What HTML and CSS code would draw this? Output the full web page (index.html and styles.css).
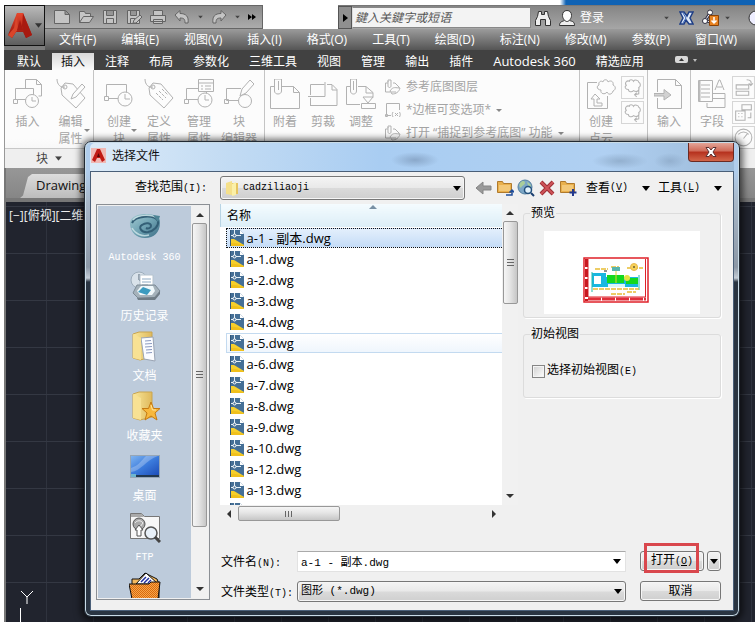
FILE: index.html
```html
<!DOCTYPE html>
<html lang="zh-CN">
<head>
<meta charset="utf-8">
<title>选择文件</title>
<link rel="stylesheet" href="styles.css">
</head>
<body>
<svg class="sprite" aria-hidden="true">
  <defs>
    <linearGradient id="gFolder" x1="0" x2="1"><stop offset="0" stop-color="#f9e79a"/><stop offset="1" stop-color="#dfb95c"/></linearGradient>
    <linearGradient id="gScreen" x1="0" y1="0" x2="1" y2="1"><stop offset="0" stop-color="#7fb4f0"/><stop offset=".5" stop-color="#3b7bdc"/><stop offset="1" stop-color="#1d4db8"/></linearGradient>
    <linearGradient id="gSwirl" x1="0" y1="0" x2="1" y2="1"><stop offset="0" stop-color="#a5cbd2"/><stop offset=".5" stop-color="#6fa3b3"/><stop offset="1" stop-color="#3c6c84"/></linearGradient>
    <linearGradient id="gRed" x1="0" y1="0" x2="0" y2="1"><stop offset="0" stop-color="#e8482e"/><stop offset="1" stop-color="#8e120c"/></linearGradient>
    <pattern id="pDots" width="2" height="2" patternUnits="userSpaceOnUse"><rect width="2" height="2" fill="#f7a64a"/><rect width="1" height="1" fill="#d8690e"/><rect x="1" y="1" width="1" height="1" fill="#d8690e"/></pattern>
  </defs>
  <symbol id="dwg" viewBox="0 0 14 16">
    <path d="M0 0h10l4 4v12H0z" fill="#456f96"/><path d="M0 9h4l10 6v1H0z" fill="#f6cf2c"/><path d="M0 13c5-1 8 1 14 2v1H0z" fill="#f0c01c"/>
    <path d="M4.500 0v7M0 5.500h11" stroke="#e6f0f6" fill="none"/><circle cx="4.500" cy="5.500" r="1.500" fill="#456f96" stroke="#fff"/>
    <path d="M10 0v4h4z" fill="#fff"/><path d="M.5 0v16" stroke="#31567a"/>
  </symbol>
  <symbol id="down" viewBox="0 0 8 5"><path d="M0 0h8L4 5z" fill="currentColor"/></symbol>
  <symbol id="block" viewBox="0 0 30 30"><path d="M2.500 5.500h20v14h-20z" class="ln"/><circle cx="21" cy="20" r="7" class="ln disc"/><path d="M21 20v-5M21 20h5" class="ln"/><path d="M.5 17.500h4v4h-4z" class="ln disc"/></symbol>
  <symbol id="insert" viewBox="0 0 30 30"><path d="M12.500 9V.5h11l5 5V17h-3M23.500.5v5h5" class="ln"/><path d="M2.500 9.500h18v11h-18z" class="ln"/><circle cx="19" cy="22" r="6.500" class="ln disc"/><path d="M19 22v-4M19 22h4" class="ln"/><path d="M.5 20.500h4v4h-4z" class="ln disc"/></symbol>
  <symbol id="tag" viewBox="0 0 30 30"><path d="M5 9 9 4l8 1 12 14-9 10L6 16zM1 0c0 6 4 9 8 8" class="ln"/><circle cx="9" cy="8" r="2" class="ln"/><path d="m12 14 7 7M15 12l7 7M18 10l6 6" class="ln" stroke-dasharray="3 1"/></symbol>
  <symbol id="tagpen" viewBox="0 0 30 30"><path d="M5 9 9 4l8 1 12 14-9 10L6 16zM1 0c0 6 4 9 8 8" class="ln"/><circle cx="9" cy="8" r="2" class="ln"/><path d="m15 20 2-5L26 5l3 3-9 10z" class="ln disc"/></symbol>
  <symbol id="manage" viewBox="0 0 30 30"><path d="M14.500.5h15v12h-15zM14 4h15M17 7h2M21 7h6M17 10h2M21 10h6" class="ln"/><path d="M14 9.500H2.500v11h12M22.500 13v2" class="ln"/><circle cx="21" cy="21" r="7" class="ln disc"/><path d="M21 21v-5M21 21h4M.5 20.500h4v4h-4z" class="ln"/></symbol>
  <symbol id="blockedit" viewBox="0 0 30 30"><path d="M17 9.500H2.500v12h12" class="ln"/><circle cx="21" cy="22" r="6.500" class="ln"/><path d="m16 17 2-7 8-9 4 4-8 9z" class="ln disc"/><path d="M.5 20.500h4v4h-4z" class="ln"/></symbol>
  <symbol id="attach" viewBox="0 0 30 30"><path d="M4 7.500H.5v22h29v-16l-6-6H12M23.500 7.500v6h6" class="ln"/><path d="M4.500 3v9c0 4 7 4 7 0V0h-7v3M8.500 2v9" class="ln"/></symbol>
  <symbol id="clip" viewBox="0 0 30 30"><path d="M2.500 16V5.500h14M3 26.500h26v-16l-5-5h-5M24 6v5h5M0 17.500h17V3M2.500 19v8" class="ln"/></symbol>
  <symbol id="adjust" viewBox="0 0 30 30"><path d="M4 7.500H.5v18H14M12 7.500h8l7 6v5M20 8v6h7" class="ln"/><path d="M4.500 3v9c0 4 6 4 6 0V0h-6v3M7.500 2v9M17 18h10l-5 6zM15.500 24.500h14v5h-14z" class="ln"/></symbol>
  <symbol id="cloud" viewBox="0 0 30 30"><path d="M11 3.500H1.500v26h20V17" class="ln"/><path d="M17 3c0-3 5-3 5 0 2-2 6-1 5 3 3 1 3 5 0 6-1 4-5 4-6 1-2 3-7 2-6-2-4 0-5-4-2-5-1-3 2-5 4-3zM5 20l4-5 5 5h-3v4h5v3H8v-7z" class="ln"/></symbol>
  <symbol id="cloudsm" viewBox="0 0 22 22"><path d="M.5.5h21v21H.5z" class="box"/><path d="M8 5c0-2 3-2 4 0 1-2 5-1 5 1 2 1 2 4 0 5 1 3-2 5-5 3-2 2-5 1-5-1-3 0-4-3-2-4-2-3 1-5 3-4zM17 13v4l-4 1M15 16l-2 2 2 2" class="ln"/></symbol>
  <symbol id="import" viewBox="0 0 30 30"><path d="M3.500 13V.5h18l6 6v23h-24V19M21.500.5v6h6" class="ln"/><path d="M0 14.500h10v-4l7 5.500-7 5v-4H0z" fill="#d2d2d2" stroke="#b2b2b2"/></symbol>
  <symbol id="field" viewBox="0 0 30 30"><path d="M1.500 1.500h14v21h-14zM4 6h9M4 10h9M4 14h9M4 18h9M18 11l4-10h1l4 10M20 8h5M16 14.500h12v5H16M10 24v4.500h18v-9" class="ln"/><path d="M2.500 2v20" stroke="#bbb" stroke-width="2"/></symbol>
  <symbol id="row" viewBox="0 0 22 22"><path d="M.5.5h21v21H.5z" class="box"/><path d="M4 8.500h12v4H4zM4 14.500h12v4H4zM14 3.500c4 0 5 2 4 5M16 7l2 2 2-2" class="ln"/></symbol>
  <symbol id="rowgrid" viewBox="0 0 22 22"><path d="M.5.5h21v21H.5z" class="box"/><path d="M9.500 3.500h9v5h-9zM3.500 9.500h9v9h-9zM6 12h1M9 12h1M6 15h1M9 15h1M18 11v5h-3" class="ln"/></symbol>
  <symbol id="dial" viewBox="0 0 22 22"><path d="M.5.5h21v21H.5z" class="box"/><circle cx="11" cy="11" r="8" class="ln"/><path d="M6 8c3-3 7-3 10 0M11 12l4-5" class="ln"/></symbol>
  <symbol id="leaf" viewBox="0 0 16 16"><path d="M3 4H.5v9H5M3 2v5c0 2 3 2 3 0V1H3v2M8 4h2l4 4v1M5 12c3-5 6-3 10-3-1 4-4 6-8 6zM6 13h5" class="ln"/></symbol>
  <symbol id="frame" viewBox="0 0 16 16"><path d="M14.500 8V1.500H1.500v12H6M.5 12.500h2v2h-2zM8 10c-1 2-1 3 0 5M10 11l3 3M13 11l-3 3M14.500 10c1 2 1 3 0 5" class="ln"/></symbol>
  <symbol id="folder" viewBox="0 0 18 18"><path d="M1.500 2.500h5l1 2h8v9h-14z" fill="#e9b04c" stroke="#b07a2c"/><path d="M3 6h11v6H3z" fill="#f3c878"/></symbol>
</svg>

<div class="app">
  <header class="top">
    <button class="logo" aria-label="应用程序菜单">
      <svg width="24" height="28" viewBox="0 0 24 28"><path d="M9 1h6l9 22-6 3-3-6H8l-4 6-4-3z" fill="url(#gRed)"/><path d="M9 1 6 16l-6 7 4 3 6-9z" fill="#d9452a"/><path d="m12 8 3 10H9z" fill="#a81a10"/><path d="m15 1 9 22-6 3-4-12z" fill="#a81a10"/></svg>
      <svg class="tri" width="8" height="5"><use href="#down"/></svg>
    </button>
    <div class="bars">
      <div class="titlebar">
        <div class="quick">
          <svg width="16" height="14" viewBox="0 0 16 14"><path d="M.5.5h11l4 4v9H.5zM11 .5v4h4.500" class="q"/></svg>
          <svg width="16" height="14" viewBox="0 0 16 14"><path d="M1.500 12.500v-11h5l1 2h5v3M1.500 12.500l4-6h10l-4 6z" class="q"/></svg>
          <svg width="16" height="14" viewBox="0 0 16 14"><path d="M1.500.5h13v13h-13zM4.500.5v5h7v-5M4.500 13.500v-5h7v5" class="q"/></svg>
          <svg width="16" height="14" viewBox="0 0 16 14"><path d="M1.500.5h12v13h-12zM4.500.5v5h6v-5M4.500 13.500v-5h5" class="q"/><path d="m7 13 1-3 6-5 2 2-6 6z" class="q"/></svg>
          <svg width="16" height="14" viewBox="0 0 16 14"><path d="M3.500 5.500v-5h9v5M.5 5.500h15v6H.5zM3.500 9.500h9v4h-9z" class="q"/></svg>
          <svg width="16" height="14" viewBox="0 0 16 14"><path d="m1 5 5-4.500v3c6 0 9 3 8 9.500h-3c0-4-1-5-5-5v3z" class="q"/></svg>
          <svg class="dim" width="5" height="4" viewBox="0 0 8 5"><use href="#down"/></svg>
          <svg width="16" height="14" viewBox="0 0 16 14"><path d="m15 5-5-4.500v3c-6 0-9 3-8 9.500h3c0-4 1-5 5-5v3z" class="q"/></svg>
          <svg class="dim" width="5" height="4" viewBox="0 0 8 5"><use href="#down"/></svg>
          <svg width="8" height="6" viewBox="0 0 8 6"><path d="m0 0 4 3-4 3zM4 0l4 3-4 3z"/></svg>
        </div>
        <div class="info">
          <button class="expand" aria-label="展开"><svg width="5" height="8" viewBox="0 0 5 8"><path d="m0 0 5 4-5 4z"/></svg></button>
          <input class="search" type="text" aria-label="搜索" placeholder="鍵入关鍵字或短语">
          <svg class="bino" width="16" height="16" viewBox="0 0 16 16"><path d="M3.500 1.500h3v3h3v-3h3l1 5 2 4v5h-5v-6h-5v6h-5v-5l2-4z" fill="#eee" stroke="#333"/></svg>
          <svg class="person" width="16" height="16" viewBox="0 0 16 16"><path d="M.5 15.500c0-4 3-4 5-5h5c3 1 5 1 5 5z" fill="#eee" stroke="#333"/><path d="M8 .5c3 0 4.500 2 4.500 5S10 11.500 8 11.500 3.500 8.500 3.500 5.500 5 .5 8 .5z" fill="#fff" stroke="#333"/></svg>
          <a class="login" href="#">登录</a>
          <svg class="dim" width="5" height="4" viewBox="0 0 8 5"><use href="#down"/></svg>
          <svg width="15" height="14" viewBox="0 0 15 14"><path d="M1 1h4l3 4 2-4h4l-3 6 3 6h-4L7 9l-2 4H1l3-6z" fill="#dfe9f8" stroke="#1e3e86" stroke-width="1.500"/><path d="m4 2 3 5-3 5" fill="none" stroke="#3a66b8"/></svg>
          <svg class="share" width="17" height="17" viewBox="0 0 17 17"><path d="m8 4-5 8 8 1z" fill="none" stroke="#334" stroke-width="3"/><path d="m8 4-5 8 8 1" fill="none" stroke="#eef"/><circle cx="8" cy="3.500" r="2.500" fill="#fff" stroke="#334"/><circle cx="3" cy="12" r="2.500" fill="#fff" stroke="#334"/><path d="M7.500 6.500h9v10h-9z" fill="#e88220" stroke="#8a4206"/><path d="M12 8v6M9.500 11.500 12 14l2.500-2.500" fill="none" stroke="#fff" stroke-width="1.500"/></svg>
          <svg class="dim" width="5" height="4" viewBox="0 0 8 5"><use href="#down"/></svg>
          <svg class="help" width="16" height="16" viewBox="0 0 16 16"><circle cx="8" cy="8" r="7" fill="#eef" stroke="#333"/></svg>
        </div>
      </div>
      <nav class="menubar">
        <a href="#">文件(F)</a><a href="#">编辑(E)</a><a href="#">视图(V)</a><a href="#">插入(I)</a><a href="#">格式(O)</a><a href="#">工具(T)</a><a href="#">绘图(D)</a><a href="#">标注(N)</a><a href="#">修改(M)</a><a href="#">参数(P)</a><a href="#">窗口(W)</a>
      </nav>
    </div>
  </header>
  <nav class="tabs">
    <a href="#">默认</a><a href="#" class="active">插入</a><a href="#">注释</a><a href="#">布局</a><a href="#">参数化</a><a href="#">三维工具</a><a href="#">视图</a><a href="#">管理</a><a href="#">输出</a><a href="#">插件</a><a href="#" class="latin">Autodesk 360</a><a href="#">精选应用</a>
    <svg class="minimize" width="22" height="8" viewBox="0 0 22 8"><rect width="13" height="7" rx="2" fill="#d8d8d8"/><path d="m4 5 2.500-3L9 5z" fill="#333"/><path d="M18 3h4l-2 3z" fill="#bbb"/></svg>
  </nav>
  <section class="ribbon">
    <div class="panel">
      <div class="tools wide">
        <button><svg><use href="#insert"/></svg>插入</button>
        <button><svg><use href="#tagpen"/></svg>编辑<br>属性<i class="drop"></i></button>
      </div>
      <div class="caption">块<svg width="7" height="5" viewBox="0 0 8 5"><use href="#down"/></svg></div>
    </div>
    <div class="panel pad">
      <div class="tools">
        <button><svg><use href="#block"/></svg>创建<br>块<i class="drop"></i></button>
        <button><svg><use href="#tag"/></svg>定义<br>属性</button>
        <button><svg><use href="#manage"/></svg>管理<br>属性</button>
        <button><svg><use href="#blockedit"/></svg>块<br>编辑器</button>
      </div>
      <div class="caption"></div>
    </div>
    <div class="panel grow">
      <div class="tools narrow">
        <button><svg><use href="#attach"/></svg>附着</button>
        <button><svg><use href="#clip"/></svg>剪裁</button>
        <button><svg><use href="#adjust"/></svg>调整</button>
        <div class="small">
          <button><svg><use href="#leaf"/></svg>参考底图图层</button>
          <button><svg><use href="#frame"/></svg>*边框可变选项*<i class="drop"></i></button>
          <button><svg><use href="#leaf"/></svg><span>打开 “捕捉到参考底图” 功能</span><i class="drop"></i></button>
        </div>
      </div>
      <div class="caption"></div>
    </div>
    <div class="panel">
      <div class="tools">
        <button><svg><use href="#cloud"/></svg>创建<br>点云</button>
        <div class="mini"><svg><use href="#cloudsm"/></svg><svg><use href="#cloudsm"/></svg></div>
      </div>
      <div class="caption"></div>
    </div>
    <div class="panel">
      <div class="tools"><button><svg><use href="#import"/></svg>输入</button></div>
      <div class="caption"></div>
    </div>
    <div class="panel last">
      <div class="tools">
        <button><svg><use href="#field"/></svg>字段</button>
        <div class="mini"><svg><use href="#row"/></svg><svg><use href="#rowgrid"/></svg><svg><use href="#dial"/></svg></div>
      </div>
      <div class="caption"></div>
    </div>
  </section>
  <div class="doctabs"><a href="#" class="doc">Drawing</a></div>
  <main class="canvas">
    <span class="viewlabel">[−][俯视][二维</span>
    <svg class="ucs" width="14" height="32" viewBox="0 0 14 32"><path d="m1 1 6 6 6-6M7 7v7M.5 18v14" stroke="#fff" fill="none"/></svg>
  </main>
</div>

<div class="dialog" role="dialog" aria-labelledby="dialog-title">
  <div class="caption-bar">
    <svg width="15" height="15" viewBox="0 0 15 15"><rect width="15" height="15" fill="#f0b9b4"/><path d="M6 1h3l5 11-3 2-2-4H6l-2 4-3-2z" fill="#c01a14"/><path d="m7.500 5 1.500 4H6z" fill="#5a0806"/></svg>
    <h1 id="dialog-title">选择文件</h1>
    <button class="close" aria-label="关闭"><svg width="12" height="10" viewBox="0 0 12 10"><path d="M1 .5h3l2 2.500 2-2.500h3L8 5l3 4.500H8L6 7 4 9.500H1L4 5z" fill="#fff" stroke="#5d3030"/></svg></button>
  </div>
  <div class="sheet">
    <div class="lookin">
      <label for="look">查找范围<span class="m">(I):</span></label>
      <div class="combo">
        <svg class="cfolder" width="15" height="15" viewBox="0 0 15 15"><path d="M1 2 7 0v14l-6-1z" fill="#f5e08a"/><path d="M7 2h6v11H7z" fill="#e6c460"/><path d="M7 3 11 1v13l-4 1z" fill="#fbf0a8"/></svg>
        <select id="look" class="face m"><option>cadziliaoji</option></select>
        <svg class="arrow" width="8" height="5"><use href="#down"/></svg>
      </div>
      <div class="toolbar">
        <button aria-label="返回"><svg width="17" height="14" viewBox="0 0 17 14"><path d="m1 7 7-6v4h8v4H8v4z" fill="#9a9a9a" stroke="#858585"/></svg></button>
        <button aria-label="上一级"><svg width="18" height="18" viewBox="0 0 18 18"><use href="#folder"/><path d="M10 16h6v-5M13.500 13.500 16 11l2.500 2.500" fill="none" stroke="#1f4d9a" stroke-width="1.500"/></svg></button>
        <button aria-label="搜索 Web"><svg width="18" height="18" viewBox="0 0 18 18"><circle cx="8" cy="8" r="7" fill="#7ba6c6" stroke="#54809f"/><path d="M3 4c3-3 5-2 5 0s-3 2-4 5c-2-1-2-3-1-5zM10 3c3 1 4 3 4 5l-3-2z" fill="#a9cd9a"/><circle cx="11" cy="11" r="3.500" fill="#e2f2fb" stroke="#22507c" stroke-width="1.500"/><path d="m14 14 3 3" stroke="#1b3f70" stroke-width="2"/></svg></button>
        <button aria-label="删除"><svg width="16" height="16" viewBox="0 0 16 16"><path d="m2 2 12 12M14 2 2 14" stroke="#9e2f34" stroke-width="4"/><path d="m2 2 12 12M14 2 2 14" stroke="#cf5459" stroke-width="2"/></svg></button>
        <button aria-label="新建文件夹"><svg width="18" height="18" viewBox="0 0 18 18"><use href="#folder"/><path d="M14 10v7M10.500 13.500h7" stroke="#23388c" stroke-width="2"/></svg></button>
        <button class="menu">查看<span class="m">(<u>V</u>)</span><svg width="8" height="5"><use href="#down"/></svg></button>
        <button class="menu">工具<span class="m">(<u>L</u>)</span><svg width="8" height="5"><use href="#down"/></svg></button>
      </div>
    </div>

    <div class="places">
      <ul>
        <li><svg viewBox="0 0 32 32"><path d="M1 14C0 7 7 3 16 3s16 2 15 9c0 9-6 15-15 15S2 21 1 14z" fill="url(#gSwirl)"/><path d="M3 12C6 5 25 3 29 10c1 5-4 10-10 11-7 1-10-5-6-7 4-3 9-2 9 1 0 2-3 3-5 2" stroke="#335f76" stroke-width="2" fill="none"/><path d="M4 9C9 3 24 3 29 8M3 17c3 6 10 9 17 7" stroke="#cfe6ea" stroke-width="1.500" fill="none" opacity=".8"/><path d="M24 4l7 1-2 6z" fill="#4f8596"/></svg><span class="m">Autodesk 360</span></li>
        <li><svg viewBox="0 0 32 32"><circle cx="10" cy="9" r="8" fill="#d9e2ea" stroke="#9dadbb"/><path d="M10 9V3M10 9l5 2" stroke="#567"/><path d="M11 4h13v15H11z" fill="#fff" stroke="#b5c3ce"/><path d="M13 8h9M13 11h9M13 14h6" stroke="#8fabc4"/><path d="m4 22 4-8h18l5 6-6 7H9z" fill="#a5b2bb" stroke="#7c8a95"/><path d="m8 20 4-5h12l2 5-3 4H11z" fill="#f0f8fb"/><path d="m9 21 5-5 8 3-4 5z" fill="#3b9bc0"/><path d="m8 27 18-1 5-6v3l-5 6H9z" fill="#6f7c86"/></svg>历史记录</li>
        <li><svg viewBox="0 0 32 32"><path d="M4 3 10 1h13v25l-12 3-7-2z" fill="url(#gFolder)" stroke="#c9a550"/><path d="m12 7 12-1 2 24-11-2z" fill="#fbfcff" stroke="#9aa4b4"/><path d="m16 10 6-.5M16 13l7-.5M16 16l7-.5M17 19l6-.5M17 22l6-.5" stroke="#8b9ac0"/><path d="m4 3 8 4v22l-8-2z" fill="#f8e193"/></svg>文档</li>
        <li><svg viewBox="0 0 32 32"><path d="M4 3 10 1h13v25l-12 3-7-2z" fill="url(#gFolder)" stroke="#c9a550"/><path d="m4 3 8 4v22l-8-2z" fill="#f8e193"/><path d="m22 11 2.500 6.500H31l-5 4.500 2 7-6-4-6 4 2-7-5-4.500h6.500z" fill="#f8b83c" stroke="#c57a12"/><path d="m22 14 1.500 5H27" fill="none" stroke="#ffe6a0"/></svg>收藏夹</li>
        <li><svg viewBox="0 0 32 32"><path d="M1 4h30v23H1z" fill="#96a6b6"/><path d="M2 5h28v19H2z" fill="url(#gScreen)"/><path d="M2 21C12 20 17 9 29 5H17C12 10 9 15 2 17z" fill="#fff" opacity=".25"/><path d="M2 24h28v2H2z" fill="#22384f"/><path d="M2 23h5v3H2z" fill="#6db6cf"/></svg>桌面</li>
        <li><svg viewBox="0 0 32 32"><path d="M1.500 27.500V2.500h11l3 3h15v22z" fill="#f7f7f7" stroke="#777"/><path d="M2 3h11l2 3H2z" fill="#aaa"/><circle cx="10" cy="13" r="6" fill="#aaa" stroke="#555"/><path d="M6 12c2-3 6-3 8 0l-3 4" stroke="#eee" fill="none"/><path d="m10 14 4 5h-2v6H8v-6H6z" fill="#fff" stroke="#555"/><circle cx="22" cy="22" r="6" fill="#e8f0f8" stroke="#555" stroke-width="1.500"/><path d="m26 26 5 5" stroke="#444" stroke-width="3"/></svg><span class="m">FTP</span></li>
        <li><svg viewBox="0 0 32 32"><path d="M3 8h7l6-6 12 6 2 5v14H3z" fill="#f5b95e" stroke="#111"/><path d="M7 13 17 2l12 11z" fill="#fff" stroke="#111"/><path d="m12 11 5-5M15 12l5-5M19 12l3-3" stroke="#2030a0" stroke-width="1.500"/><path d="M0 13h20l2-2h9l-2 17H3z" fill="url(#pDots)" stroke="#111"/></svg></li>
      </ul>
      <div class="vscroll"><i class="up"></i><i class="thumb"></i><i class="dn"></i></div>
    </div>

    <div class="filepane">
      <div class="viewport">
        <table class="files">
          <thead><tr><th>名称<svg class="sort" width="8" height="4" viewBox="0 0 8 4"><path d="m0 4 4-4 4 4z" fill="#7890a4"/></svg></th></tr></thead>
          <tbody>
            <tr class="selected"><td><svg><use href="#dwg"/></svg>a-1 - 副本.dwg</td></tr>
            <tr><td><svg><use href="#dwg"/></svg>a-1.dwg</td></tr>
            <tr><td><svg><use href="#dwg"/></svg>a-2.dwg</td></tr>
            <tr><td><svg><use href="#dwg"/></svg>a-3.dwg</td></tr>
            <tr><td><svg><use href="#dwg"/></svg>a-4.dwg</td></tr>
            <tr class="hover"><td><svg><use href="#dwg"/></svg>a-5.dwg</td></tr>
            <tr><td><svg><use href="#dwg"/></svg>a-6.dwg</td></tr>
            <tr><td><svg><use href="#dwg"/></svg>a-7.dwg</td></tr>
            <tr><td><svg><use href="#dwg"/></svg>a-8.dwg</td></tr>
            <tr><td><svg><use href="#dwg"/></svg>a-9.dwg</td></tr>
            <tr><td><svg><use href="#dwg"/></svg>a-10.dwg</td></tr>
            <tr><td><svg><use href="#dwg"/></svg>a-12.dwg</td></tr>
            <tr><td><svg><use href="#dwg"/></svg>a-13.dwg</td></tr>
            <tr><td><svg><use href="#dwg"/></svg></td></tr>
          </tbody>
        </table>
      </div>
      <div class="vscroll"><i class="up"></i><i class="thumb"></i><i class="dn"></i></div>
      <div class="hscroll"><i class="lt"></i><i class="thumb"></i><i class="rt"></i></div>
    </div>

    <div class="side">
      <fieldset>
        <legend>预览</legend>
        <div class="preview">
          <svg width="66" height="46" viewBox="0 0 66 46">
            <path d="M1 1h64v44H1z" fill="#fff" stroke="#e02028" stroke-width="1.500"/><path d="M5 2v38h57.500V2" fill="none" stroke="#e02028"/><path d="M3.500 2v42" stroke="#c81820" stroke-width="3" stroke-dasharray="8 2"/><path d="M5 42h58" stroke="#e0303a" stroke-width="3" stroke-dasharray="13 1"/>
            <path d="M9 16h14v4h32v10H9z" fill="#19b7e0"/><path d="M24 18h17v8H24zM43 21h12v6H43z" fill="#13d81e"/><path d="M11 19h7v8h-7z" fill="#fff"/><path d="M25 27h17v3H25z" fill="#dcf7f9"/><path d="M9 15v20M56 18v15" stroke="#20bbaa"/>
            <path d="M10 32h46M12 12h13M28 10h8M44 11h16M28 37h14M44 35h9" stroke="#e7bd35" stroke-width="1.500" stroke-dasharray="5 1"/><path d="M33 12v14" stroke="#e0d430"/><circle cx="51" cy="10" r="3.500" fill="#f7d258" stroke="#e8b84c"/><circle cx="44" cy="21" r="3" fill="#e5e340"/><path d="M29 10h8v4h-8z" fill="#58b5ae"/><path d="M21 14h3M50 10h2" stroke="#222"/>
          </svg>
        </div>
      </fieldset>
      <fieldset class="initial">
        <legend>初始视图</legend>
        <label><input type="checkbox"><span>选择初始视图<span class="m">(E)</span></span></label>
      </fieldset>
    </div>

    <form class="bottom">
      <label for="fname">文件名<span class="m">(N):</span></label>
      <div class="combo edit"><input id="fname" type="text" value="a-1 - 副本.dwg"><svg class="arrow" width="8" height="5"><use href="#down"/></svg></div>
      <div class="actions">
        <button type="button" class="face open">打开<span class="m">(<u>O</u>)</span><i class="marker"></i></button>
        <button type="button" class="face split" aria-label="打开选项"><svg width="8" height="5"><use href="#down"/></svg></button>
      </div>
      <label for="ftype">文件类型<span class="m">(T):</span></label>
      <div class="combo"><select id="ftype" class="face"><option>图形 (*.dwg)</option></select><svg class="arrow" width="8" height="5"><use href="#down"/></svg></div>
      <div class="actions"><button type="button" class="face cancel">取消</button></div>
    </form>
  </div>
</div>
</body>
</html>
```
FILE: styles.css
```css
* { box-sizing: border-box; }
body {
  margin: 0;
  height: 100vh;
  overflow: hidden;
  position: relative;
  background: #fff;
  font: 12px/16px "Open Sans", "Noto Sans CJK SC", sans-serif;
  color: #111;
}
button, input, select { font: inherit; color: inherit; margin: 0; padding: 0; border: 0; background: none; border-radius: 0; }
a { color: inherit; text-decoration: none; }
svg { flex: none; display: block; }
.sprite { position: absolute; width: 0; height: 0; }
.ln { fill: none; stroke: #b2b2b2; }
.ln.disc { fill: #fcfcfc; }
.box { fill: none; stroke: #d6d6d6; }
.m { font-family: "Liberation Mono", "Noto Sans CJK SC", monospace; font-size: 10px; }

/* application frame */
.app { height: 100%; padding: 5px 0 0 4px; display: flex; flex-direction: column; background: linear-gradient(90deg, #fff 560px, #0f62b4 566px) top / 100% 5px no-repeat; }
.top { display: flex; height: 45px; background: #7b7b7b; flex: none; }
.logo { width: 41px; height: 41px; border: 1px solid #111; background: linear-gradient(#b9b9b9, #5d5d5d); display: flex; align-items: center; justify-content: center; gap: 3px; flex: none; color: #333; }
.logo .tri { width: 7px; }
.bars { flex: 1; min-width: 0; }
.titlebar { display: flex; height: 24px; background: #fff; }
.quick { flex: none; width: 218px; display: flex; align-items: center; gap: 8px; padding-left: 9px; border: 1px solid #666; border-left: 0; background: linear-gradient(#8b8b8b, #acacac); }
.q { fill: #c4c4c4; stroke: #646464; }
.dim { color: #444; }
.info { flex: 1; margin-left: 75px; display: flex; align-items: center; background: linear-gradient(#858585, #a6a6a6); border-top: 1px solid #777; min-width: 0; color: #fff; }
.expand { width: 14px; height: 100%; display: flex; align-items: center; justify-content: center; border: 1px solid #555; background: #8f8f8f; }
.search { flex: 1; min-width: 0; height: 21px; background: #f3f3f3; padding-left: 2px; border: 1px solid #888; border-left-color: #ddd; font-style: italic; }
.search::placeholder { color: #555; opacity: 1; }
.bino { margin-left: 4px; }
.person { margin: 0 5px 0 8px; }
.login { margin-right: 60px; }
.info .dim + svg { margin-left: 10px; }
.share { margin: 0 6px 0 8px; }
.info .dim + .help { margin: 0 -9px 0 18px; }
.menubar { height: 21px; display: flex; gap: 25px; padding-left: 14px; background: linear-gradient(#9b9b9b, #555); color: #fff; line-height: 21px; white-space: nowrap; overflow: hidden; }
.tabs { height: 20px; flex: none; display: flex; align-items: flex-end; gap: 2px; padding-left: 4px; background: #414141; color: #fff; white-space: nowrap; }
.tabs a { padding: 0 9px; line-height: 17px; }
.tabs .latin { font-size: 13px; }
.tabs .active { background: linear-gradient(#d8d8d8, #fafafa); color: #111; }
.minimize { margin: 0 0 6px 20px; }

/* ribbon */
.ribbon { height: 98px; flex: none; display: flex; background: linear-gradient(#fcfcfc 70%, #eee); color: #a4a4a4; border-left: 1px solid #999; overflow: hidden; }
.panel { flex: none; display: flex; flex-direction: column; border-right: 1px solid #c4c4c4; }
.panel.pad { padding: 0 4px; }
.panel.grow { flex: 1; min-width: 0; }
.panel.last { margin-right: -4px; }
.tools { flex: 1; display: flex; padding: 9px 1px 0; overflow: hidden; }
.tools > button { position: relative; width: 40px; display: flex; flex-direction: column; align-items: center; line-height: 17px; white-space: nowrap; }
.tools > button svg { width: 30px; height: 30px; margin-bottom: 4px; }
.tools.wide > button { width: 43px; }
.tools.narrow > button { width: 38px; }
.drop { display: inline-block; border: 3px solid transparent; border-top-color: #888; border-bottom: 0; }
.tools > button > .drop { position: absolute; right: 2px; top: 50px; }
.small { display: flex; flex-direction: column; gap: 7px; margin-left: 5px; flex: none; }
.small button { display: flex; align-items: center; gap: 5px; white-space: nowrap; }
.small svg { width: 16px; height: 16px; }
.mini { display: flex; flex-direction: column; gap: 2px; margin-top: -3px; padding-right: 2px; }
.mini svg { width: 23px; height: 23px; }
.caption { height: 20px; flex: none; display: flex; align-items: center; justify-content: center; gap: 7px; border-top: 1px solid #c8c8c8; background: #efefef; color: #444; }
.doctabs { height: 34px; flex: none; padding: 6px 0 0 14px; background: linear-gradient(#979797, #868686); border-bottom: 4px solid #777; border-left: 2px solid #777; }
.doc { display: inline-block; height: 24px; padding: 0 30px 0 16px; font-size: 13px; line-height: 22px; background: linear-gradient(#dcdcdc, #bcbcbc); clip-path: polygon(0 100%, 3px 90%, 8px 12%, 12px 0, 100% 0, 100% 100%); }
.canvas {
  flex: 1; display: flex; flex-direction: column; justify-content: space-between; min-height: 0; color: #eee;
  padding: 6px 0 0 3px; border-left: 2px solid #777;
  background: linear-gradient(#343843 1px, transparent 1px) 0 4px / 47px 47px, linear-gradient(90deg, #2f333e 1px, transparent 1px) 40px 0 / 47px 47px, #21242e;
}
.ucs { margin-left: 11px; }

/* file dialog */
.dialog {
  position: absolute; top: 141px; left: 84px; right: 15px; padding: 1px 5px 5px;
  border: 1px solid #222a33; border-radius: 7px;
  box-shadow: inset 0 0 0 1px #c9dbe6, 0 1px 7px 3px rgba(0, 0, 0, .6);
  background: linear-gradient(#b0cdec 30px, #a9b8c8 60px, #8c98a6 125px, #c4cdd6 136px, #2a3542 140px);
}
.caption-bar {
  display: flex; align-items: flex-start; height: 28px; padding: 5px 0 0 1px; gap: 6px; border-radius: 5px 5px 0 0;
  background: radial-gradient(ellipse 24px 8px at 325px 17px, #8aa8ca, transparent), radial-gradient(ellipse 28px 8px at 530px 18px, #93b0cf, transparent), radial-gradient(ellipse 16px 8px at 580px 18px, #93b0cf, transparent), linear-gradient(90deg, #dcebf8, #c2dbf3 22%, #a9cdf2 45%, #b0d0f2 80%, #9dbbd9);
}
.caption-bar h1 { margin: 0; font-size: 12px; font-weight: 400; flex: 1; }
.close { width: 46px; height: 19px; margin-top: -5px; display: flex; align-items: center; justify-content: center; border: 1px solid #6b2a22; border-top: 0; border-radius: 0 0 4px 4px; background: linear-gradient(#e3a497, #cf6a58 45%, #b5301d 50%, #d2664a); }
.sheet {
  display: grid; grid-template-columns: 124px minmax(0, 1fr) 198px; padding: 4px 12px 8px 5px;
  border: 1px solid #4a5f78; background: #f0f0f0; color: #000;
}
.lookin { grid-column: 1 / -1; display: flex; align-items: center; height: 24px; margin-bottom: 4px; }
.lookin label { width: 124px; padding-right: 13px; text-align: right; }
.lookin .combo { flex: 1; height: 24px; }
.combo { position: relative; min-width: 0; height: 21px; }
.combo select { appearance: none; width: 100%; height: 100%; padding-left: 3px; }
.combo #look { padding-left: 22px; }
#ftype, #fname { font-family: "Liberation Mono", "Noto Sans CJK SC", monospace; font-size: 11px; }
.face { border: 1px solid #777; border-radius: 3px; background: linear-gradient(#f4f4f4, #e9e9e9 48%, #dadada 52%, #cfcfcf); box-shadow: inset 0 0 0 1px #f6f6f6; }
.combo .arrow { position: absolute; right: 4px; top: 0; bottom: 0; margin: auto; }
.cfolder { position: absolute; left: 5px; top: 5px; }
.combo.edit { background: #fff; border: 1px solid #e2e2e2; border-top-color: #aaa; }
.combo.edit input { width: 100%; height: 100%; padding-left: 3px; outline: 0; }
.toolbar { display: flex; align-items: center; width: 256px; padding-left: 8px; flex: none; }
.toolbar button { width: 21px; display: flex; justify-content: center; align-items: center; flex: none; white-space: nowrap; }
.toolbar .menu { width: auto; margin-left: 8px; }
.toolbar .menu svg { margin-left: 14px; }

.places { grid-row: 2 / 4; width: 114px; contain: size; display: flex; overflow: hidden; border: 1px solid #8b8f94; padding: 1px; margin-bottom: 2px; background: #f0f0f0; }
.places ul { flex: 1; margin: 0; padding: 5px 0 0; list-style: none; overflow: hidden; background: #bdcbdb; color: #fff; text-align: center; }
.places li { height: 60px; white-space: nowrap; }
.places li svg { width: 32px; height: 32px; margin: 0 auto 5px; }
.vscroll { width: 17px; flex: none; display: flex; flex-direction: column; align-items: center; background: #f1f1f1; }
.places .thumb { flex: none; height: 304px; }
.vscroll .thumb, .hscroll .thumb { border: 1px solid #989898; border-radius: 2px; }
.vscroll .thumb { width: 15px; background: repeating-linear-gradient(#666 0 1px, transparent 1px 3px) center / 7px 8px no-repeat, linear-gradient(90deg, #f5f5f5, #e5e5e5 45%, #c6c6c6); }
.up, .dn { border: 4px solid transparent; }
.up { border-bottom: 4px solid #333; border-top: 0; margin: 7px 0 6px; }
.dn { border-top: 4px solid #333; border-bottom: 0; margin: auto 0 7px; }

.filepane { display: grid; grid-template-columns: minmax(0, 1fr) 16px; grid-template-rows: 301px 17px; margin-right: 5px; }
.viewport { overflow: hidden; background: #fff; }
.files { width: 100%; border-collapse: collapse; font-size: 13px; position: relative; z-index: 0; }
.files th { position: relative; height: 23px; padding: 0 6px; text-align: left; font-size: 12px; font-weight: 400; border-left: 1px solid #b8d4e4; background: linear-gradient(#f4fbfe, #dceef7); }
.sort { position: absolute; left: 8%; right: 0; top: 1px; margin: auto; }
.files td { height: 21px; padding: 1px 0 0 26px; position: relative; white-space: nowrap; }
.files td svg { position: absolute; left: 9px; top: 3px; width: 14px; height: 16px; }
.files td::before { content: ""; position: absolute; inset: 1px 0 0 5px; z-index: -1; }
.selected td::before { background: linear-gradient(#e3effc, #c5dcf7); border: 1px dotted #111; border-right: 0; }
.hover td::before { background: linear-gradient(#fff, #eff6fd); border: 1px solid #c3daf0; border-right: 0; }
.filepane .thumb { flex: none; height: 83px; }
.filepane .vscroll { width: 16px; }
.hscroll { display: flex; align-items: center; background: #f0f0f0; }
.filepane .hscroll .thumb { width: 102px; height: 15px; background: repeating-linear-gradient(90deg, #666 0 1px, transparent 1px 3px) center / 8px 6px no-repeat, linear-gradient(#f5f5f5, #e5e5e5 45%, #c6c6c6); }
.lt, .rt { border: 4px solid transparent; }
.lt { border-right-color: #333; border-left: 0; margin: 0 7px; }
.rt { border-left-color: #333; border-right: 0; margin: 0 6px 0 auto; }

.side { display: flex; flex-direction: column; gap: 8px; padding-top: 1px; }
fieldset { min-width: 0; margin: 0; padding: 10px 20px 3px; border: 1px solid #dcdcdc; border-radius: 3px; box-shadow: 1px 1px 0 #fff; }
legend { margin-left: -14px; padding: 0 1px; }
.preview { height: 83px; display: flex; align-items: center; justify-content: center; background: #fff; }
.preview svg { margin: 14px 12px 0 0; }
.initial { padding: 20px 8px 17px; }
.initial legend { margin-left: -2px; }
.initial label { display: flex; align-items: center; gap: 2px; }
.initial input { appearance: none; width: 13px; height: 13px; border: 1px solid #858585; background: linear-gradient(135deg, #cfcfcf, #fff); box-shadow: inset 0 0 0 1px #f4f4f4; }

.bottom { grid-column: 2 / 4; display: grid; grid-template-columns: 77px minmax(0, 1fr) 81px; row-gap: 8px; margin: 28px 0 0; align-items: center; }
.bottom label { padding: 4px 0 0 1px; }
.bottom .combo { margin-right: 14px; }
.actions { display: flex; gap: 3px; height: 20px; }
.actions .face { height: 20px; }
.open { flex: 1; position: relative; }
.marker { position: absolute; inset: -9px 4px -3px 3px; border: 3px solid #d9474d; }
.split { width: 14px; display: flex; align-items: center; justify-content: center; }
.cancel { flex: 1; }
```
